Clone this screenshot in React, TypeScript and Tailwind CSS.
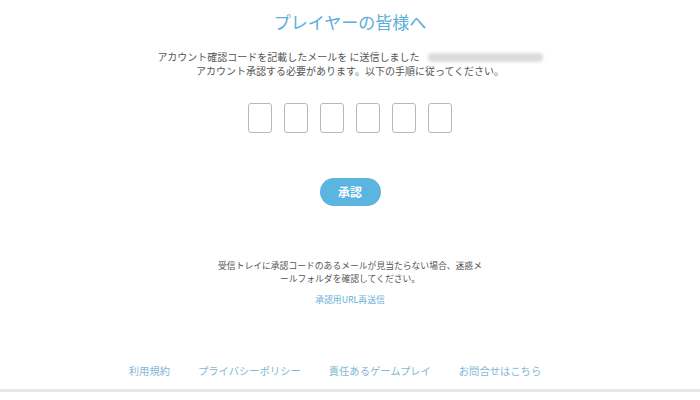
const font = { fontFamily: '"Noto Sans CJK JP", "Noto Sans", sans-serif' };

const footerLinks = ['利用規約', 'プライバシーポリシー', '責任あるゲームプレイ', 'お問合せはこちら'];

export default function App() {
  return (
    <div className="w-[700px] h-[400px] bg-white flex flex-col items-center overflow-hidden" style={font}>
      {/* Heading */}
      <h1 className="mt-[10px] text-[17px] leading-[24px] text-[#5aaed9]">プレイヤーの皆様へ</h1>

      {/* Intro */}
      <div className="mt-[16px] flex flex-col items-center text-[10px] leading-[14px] text-[#555555]">
        <div className="flex items-center">
          <span>アカウント確認コードを記載したメールを に送信しました</span>
          <span className="ml-[8px] w-[115px] h-[9px] rounded-sm bg-[#dcdcdc] blur-[1.5px]" />
        </div>
        <div>アカウント承認する必要があります。以下の手順に従ってください。</div>
      </div>

      {/* Code inputs */}
      <div className="mt-[25px] flex gap-[12px]">
        {[0, 1, 2, 3, 4, 5].map((i) => (
          <input
            key={i}
            type="text"
            maxLength={1}
            className="w-[24px] h-[30px] rounded-[3px] border border-[#b8b8b8] bg-white text-center text-[14px] outline-none"
          />
        ))}
      </div>

      <button className="mt-[45px] w-[61px] h-[28px] rounded-full bg-[#5cb4e0] text-white text-[12px] font-bold">
        承認
      </button>

      {/* Help text */}
      <p className="mt-[53px] text-[8.8px] leading-[13px] text-[#555555] text-center">
        受信トレイに承認コードのあるメールが見当たらない場合、迷惑メ
        <br />
        ールフォルダを確認してください。
      </p>
      <a className="mt-[8px] text-[8.8px] leading-[13px] text-[#6aafd6] cursor-pointer">承認用URL再送信</a>

      {/* Footer */}
      <div className="mt-[58px] w-full flex justify-center gap-[28px] pr-[30px]">
        {footerLinks.map((l) => (
          <a key={l} className="text-[10.3px] leading-[14px] text-[#82b7d7] cursor-pointer">
            {l}
          </a>
        ))}
      </div>
      <div className="mt-[11px] w-full h-[3px] bg-[#e8e8e8]" />
    </div>
  );
}
